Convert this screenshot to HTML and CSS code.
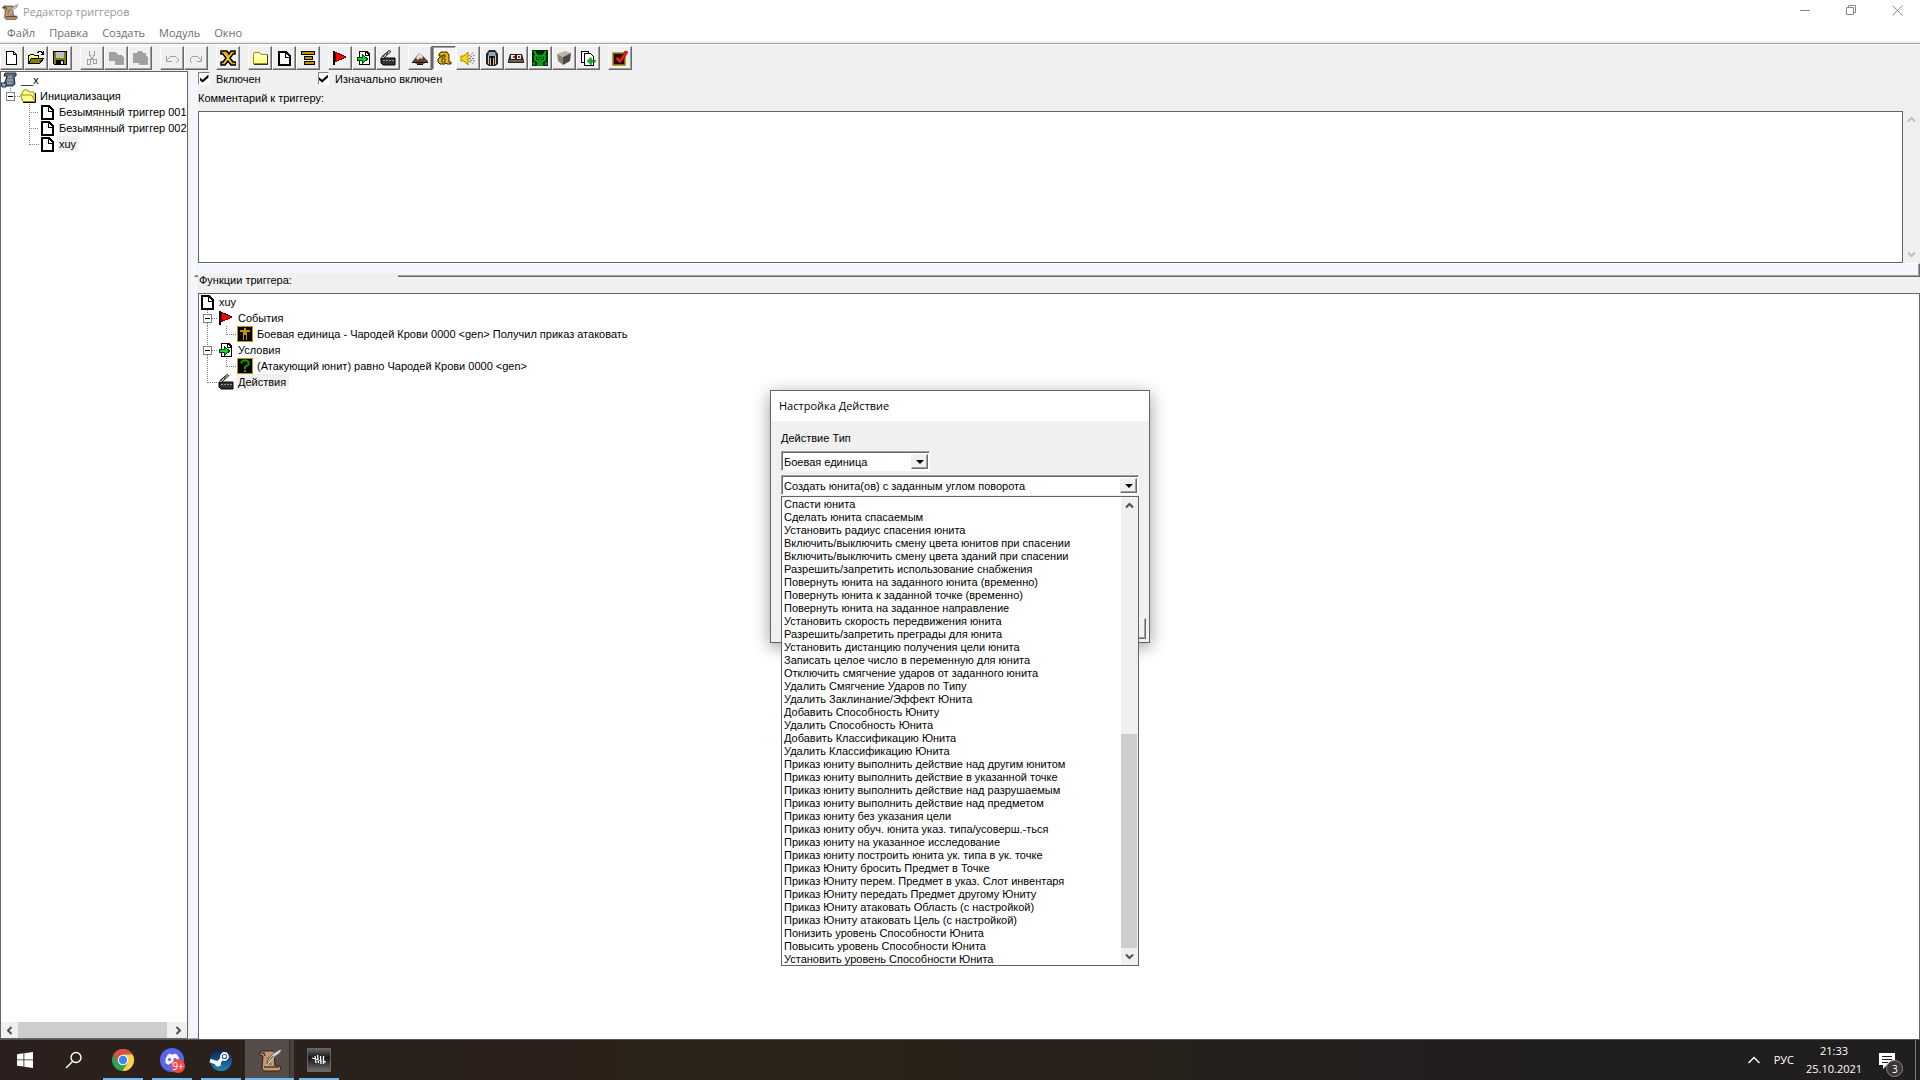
FILE: index.html
```html
<!DOCTYPE html>
<html lang="ru">
<head>
<meta charset="utf-8">
<title>Редактор триггеров</title>
<link rel="stylesheet" href="styles.css">
</head>
<body>
<svg class="defs" width="0" height="0" aria-hidden="true">
  <symbol id="page" viewBox="0 0 16 16"><path d="M3 2h7l4 4v9H3z" fill="#fff" stroke="#000" stroke-width="2"/><path d="M9 2v5h5" fill="none" stroke="#000"/></symbol>
  <symbol id="page-thin" viewBox="0 0 16 16"><path d="M2.500 1.500h7l3 3v10h-10z" fill="#fff" stroke="#000"/><path d="M9.500 1.500v3h3" fill="none" stroke="#000"/></symbol>
  <symbol id="open" viewBox="0 0 16 16"><path d="M.5 13.500v-8h1l1-1h3l1 1h4v3" fill="#ffff80" stroke="#000"/><path d="M.5 13.500l3-5h12l-4 5z" fill="#808000" stroke="#000"/><path d="M9 2.500h1l1-1h2l2 2M15.500 1v3h-3" fill="none" stroke="#000"/></symbol>
  <symbol id="save" viewBox="0 0 16 16"><path d="M1.500 1.500h13v13h-12l-1-1z" fill="#808000" stroke="#000"/><path d="M4 2h8v6H4z" fill="#c0c0c0"/><path d="M4 10h8v5H4z" fill="#000"/><path d="M9 11h2v3H9z" fill="#ddd"/></symbol>
  <symbol id="cut" viewBox="0 0 16 16"><path d="M5.500 1v4l4 5M10.500 1v4l-4 5" fill="none" stroke="#a0a0a0"/><rect x="3.500" y="9.500" width="3" height="5" rx="1" fill="none" stroke="#a0a0a0"/><rect x="9.500" y="9.500" width="3" height="4" rx="1" fill="none" stroke="#a0a0a0"/></symbol>
  <symbol id="copy" viewBox="0 0 16 16"><path d="M1 2h6l3 3h3l3 3v7H7v-4H1z" fill="#a0a0a0"/><path d="M7 15.500h9.500V8" fill="none" stroke="#fff"/></symbol>
  <symbol id="paste" viewBox="0 0 16 16"><path d="M1 3h3l2-2h3l2 2h3v3l2 2v7H7v-2H1z" fill="#a0a0a0"/><path d="M7 15.500h9.500" stroke="#fff"/></symbol>
  <symbol id="undo" viewBox="0 0 16 16"><path d="M2.500 6v5h5M3 10l4-4h4l3 3v2l-2 2" fill="none" stroke="#a0a0a0"/></symbol>
  <symbol id="redo" viewBox="0 0 16 16"><path d="M13.500 6v5h-5M13 10L9 6H5L2 9v2l2 2" fill="none" stroke="#a0a0a0"/></symbol>
  <symbol id="vars" viewBox="0 0 16 16"><path d="M1 1h6l2 3 2-3h4v3h-2l-3 4 3 4h3v3h-5l-3-4-3 4H1v-3h2l3-4-3-4H1z" fill="#d8a800" stroke="#000" stroke-width="1.500"/><path d="M4 3l7 10M12 3l-8 10" stroke="#ffe040"/></symbol>
  <symbol id="folder" viewBox="0 0 16 16"><path d="M1 4l2-2h4l2 2h6v9H1z" fill="#ffffa0" stroke="#a09000"/><path d="M2 14.500h13.500V5" fill="none" stroke="#333"/><path d="M2 5h12" stroke="#fff"/></symbol>
  <symbol id="folder-open" viewBox="0 0 16 16"><path d="M2 12V5l2-3h4l1 2h5v8z" fill="#ffff90" stroke="#a09000"/><path d="M3 13.500L0.500 7h11l3.500 6.500z" fill="#ffff90" stroke="#a09000"/><path d="M3 14.500h12.500V5" fill="none" stroke="#000"/></symbol>
  <symbol id="comment" viewBox="0 0 16 16"><path d="M1.500 1.500h13v3h-13zM4.500 6.500h8v3h-8zM4.500 11.500h10v3h-10z" fill="#c89000" stroke="#000"/></symbol>
  <symbol id="flag" viewBox="0 0 16 16"><path d="M1.500 1v14" stroke="#000" stroke-width="2"/><path d="M3 2l11 5-11 5z" fill="#f00" stroke="#600"/></symbol>
  <symbol id="cond" viewBox="0 0 16 16"><path d="M3.500 1.500h7l3 3v10h-10z" fill="#fff" stroke="#000" stroke-width="1.500"/><path d="M9.500 1.500v4h4" fill="none" stroke="#000"/><path d="M1.500 7.500h5v-3l5 4.500-5 4.500v-3h-5z" fill="#00e020" stroke="#004000"/></symbol>
  <symbol id="action" viewBox="0 0 16 16"><path d="M1 8h14v7H3l-2-2z" fill="#333" stroke="#000"/><path d="M1.500 7L9 .500l2 1L4 8" fill="#ddd" stroke="#222"/><path d="M3 7l2-3M6 5l2-3" stroke="#222"/><path d="M3 10.500h11" stroke="#999" stroke-dasharray="2 1"/></symbol>
  <symbol id="mount" viewBox="0 0 16 16"><path d="M0 12l4-5 3-4 4 3 5 5v1l-5 2H5z" fill="#604028"/><path d="M7 3l4 3-1 3-2-1-2 2-2-2z" fill="#ddd"/><path d="M0 12.500h16M5 14.500h6" stroke="#111"/></symbol>
  <symbol id="letter-a" viewBox="0 0 16 16"><path d="M3 4l2-2h6l2 3v7h2v2h-4l-1-1-1 1H4l-2-2V9l2-2h5V5H7v1H3zM6 9v3h3V9z" fill="#e8b800" stroke="#302000" fill-rule="evenodd"/></symbol>
  <symbol id="sound" viewBox="0 0 16 16"><path d="M1 6h3l4-4v13l-4-4H1z" fill="#ffd800" stroke="#a88000"/><path d="M9 8.500h6M9 6l5-4M9 11l5 3M10 7l5-2M10 10l5 1" stroke="#777" stroke-dasharray="2 1"/></symbol>
  <symbol id="unit" viewBox="0 0 16 16"><path d="M5 0h6l3 4v10l-3 2H5l-3-2V4z" fill="#222"/><path d="M5 2h6l1 4H4z" fill="#8aa8c0"/><path d="M7 6h2v7H7z" fill="#000"/><path d="M4.500 6v8M11.500 6v8M6.500 8v7M9.500 8v7" stroke="#d8c8a0"/></symbol>
  <symbol id="tab" viewBox="0 0 16 16"><path d="M2 4h12l2 7v2H0v-2z" fill="#2c201c"/><path d="M3 5h4v4H3zM9 5h4v4H9z" fill="#f4f0e8"/><path d="M5 6h2v2H5zM10 6h2v2h-2z" fill="#e01010"/><path d="M1 11h14" stroke="#b0a090"/></symbol>
  <symbol id="orc" viewBox="0 0 16 16"><path d="M0 0h16v16H0z" fill="#002800"/><path d="M2 1l3 5h6l3-5M3 5v5l3 1v2h4v-2l3-1V5M5 8h2M9 8h2M2 15v-3M14 15v-3M5 15h6M8 8v4" fill="none" stroke="#00c020" stroke-width="1.500"/></symbol>
  <symbol id="cube" viewBox="0 0 16 16"><path d="M1 4l8-3 6 2-8 4z" fill="#b8b4a8"/><path d="M1 4l6 3v8l-5-4z" fill="#888478"/><path d="M7 7l8-4-1 8-7 4z" fill="#4c4840"/></symbol>
  <symbol id="import" viewBox="0 0 16 16"><path d="M1.500 1.500h7v11h-7z" fill="#fff" stroke="#000"/><path d="M4.500 3.500h6l3 3v9h-9z" fill="#fff" stroke="#000"/><path d="M15 10h-4V7.500L7 11l4 3.500V12h4z" fill="#00c020" stroke="#003800" stroke-width=".5"/></symbol>
  <symbol id="test" viewBox="0 0 16 16"><path d="M1 3h12v12H1z" fill="#111" stroke="#b08000" stroke-width="1.500"/><path d="M3 8l3-1 2 2 5-8 3 1-7 11H7z" fill="#f02000" stroke="#600000" stroke-width=".6"/></symbol>
  <symbol id="scroll-blue" viewBox="0 0 16 16"><path d="M4 1h11v3h-2l1 8-2 2H2l-1-1 3-3 2-6H3z" fill="#607080" stroke="#182838"/><path d="M0 11h5v4H1z" fill="#9ab0c0" stroke="#182838"/><path d="M7 5h4M6 8h6M6 11h5" stroke="#b8c8d8"/></symbol>
  <symbol id="scroll" viewBox="0 0 24 24"><path d="M1 5l2-2h12l3 2-2 1 1 12h5l1 3-2 2H6l-2-2 1-13-3-1z" fill="#c09a70" stroke="#302014"/><path d="M2 5h4l1 3M6 19h15" fill="none" stroke="#5a3c22" stroke-width="1.500"/><path d="M8 10h4M8 13h2M9 16h5" stroke="#8a6644"/><path d="M9 16c1-6 5-12 15-15-1 4-5 7-10 8l-4 7z" fill="#c8c8c4" stroke="#404040" stroke-width=".8"/><path d="M9 17L22 2" stroke="#f0f0ec" stroke-width=".8"/></symbol>
  <symbol id="man" viewBox="0 0 16 16"><path d="M.5.500h15v15H.5z" fill="#000" stroke="#c89000"/><path d="M7 2h2v2h4v2h-3v8H9V9H7v5H6V6H3V4h4z" fill="#c89000"/></symbol>
  <symbol id="question" viewBox="0 0 16 16"><path d="M.5.500h15v15H.5z" fill="#000" stroke="#c89000"/><path d="M4.500 5.500V4l2-1.500h3l2 1.500v2.500L8 9v2M8 12v2" fill="none" stroke="#00a010" stroke-width="2"/></symbol>
  <symbol id="minus" viewBox="0 0 19 16"><path d="M9.500 0v4M14 8.500h5" stroke="#808080" stroke-dasharray="1 1"/><path d="M5.500 4.500h8v8h-8z" fill="#fff" stroke="#808080"/><path d="M7 8.500h5" stroke="#000"/></symbol>
  <symbol id="minus-more" viewBox="0 0 19 16"><path d="M8.500 0v4M8.500 13v3M13 8.500h6" stroke="#808080" stroke-dasharray="1 1"/><path d="M4.500 4.500h8v8h-8z" fill="#fff" stroke="#808080"/><path d="M6 8.500h5" stroke="#000"/></symbol>
  <symbol id="tee" viewBox="0 0 19 16"><path d="M9.500 0v16M9 8.500h10" stroke="#808080" stroke-dasharray="1 1"/></symbol>
  <symbol id="end" viewBox="0 0 19 16"><path d="M8.500 0v9M9 8.500h10" stroke="#808080" stroke-dasharray="1 1"/></symbol>
  <symbol id="end-side" viewBox="0 0 19 16"><path d="M9.500 0v9M10 8.500h9" stroke="#808080" stroke-dasharray="1 1"/></symbol>
  <symbol id="vert" viewBox="0 0 19 16"><path d="M8.500 0v16" stroke="#808080" stroke-dasharray="1 1"/></symbol>
  <symbol id="chev-up" viewBox="0 0 9 9"><path d="M1 6.500l3.500-3.500L8 6.500" fill="none" stroke="currentColor" stroke-width="2"/></symbol>
  <symbol id="chev-down" viewBox="0 0 9 9"><path d="M1 2.500L4.500 6 8 2.500" fill="none" stroke="currentColor" stroke-width="2"/></symbol>
  <symbol id="chev-left" viewBox="0 0 9 9"><path d="M6.500 1L3 4.500 6.500 8" fill="none" stroke="currentColor" stroke-width="2"/></symbol>
  <symbol id="chev-right" viewBox="0 0 9 9"><path d="M2.500 1L6 4.500 2.500 8" fill="none" stroke="currentColor" stroke-width="2"/></symbol>
</svg>

<div class="app">
  <header class="titlebar">
    <svg class="i16"><use href="#scroll"/></svg>
    <h1 class="title">Редактор триггеров</h1>
    <div class="caption">
      <button aria-label="Свернуть"><svg width="11" height="11"><path d="M0 5.500h10" stroke="#888"/></svg></button>
      <button aria-label="Восстановить"><svg width="11" height="11"><path d="M.5 2.500h7v7h-7zM2.500 2.500v-2h7v7h-2" fill="none" stroke="#888"/></svg></button>
      <button aria-label="Закрыть"><svg width="11" height="11"><path d="M.5.500l10 10M10.500.500l-10 10" stroke="#888"/></svg></button>
    </div>
  </header>
  <nav class="menu">
    <button>Файл</button><button>Правка</button><button>Создать</button><button>Модуль</button><button>Окно</button>
  </nav>
  <div class="toolbar" role="toolbar">
    <div class="group">
      <button class="tool"><svg class="i16 px"><use href="#page-thin"/></svg></button>
      <button class="tool"><svg class="i16 px"><use href="#open"/></svg></button>
      <button class="tool"><svg class="i16 px"><use href="#save"/></svg></button>
    </div>
    <div class="group">
      <button class="tool"><svg class="i16 px"><use href="#cut"/></svg></button>
      <button class="tool"><svg class="i16 px"><use href="#copy"/></svg></button>
      <button class="tool"><svg class="i16 px"><use href="#paste"/></svg></button>
    </div>
    <div class="group">
      <button class="tool"><svg class="i16 px"><use href="#undo"/></svg></button>
      <button class="tool"><svg class="i16 px"><use href="#redo"/></svg></button>
    </div>
    <div class="group">
      <button class="tool"><svg class="i16"><use href="#vars"/></svg></button>
    </div>
    <div class="group">
      <button class="tool"><svg class="i16 px"><use href="#folder"/></svg></button>
      <button class="tool"><svg class="i16 px"><use href="#page"/></svg></button>
      <button class="tool"><svg class="i16 px"><use href="#comment"/></svg></button>
    </div>
    <div class="group">
      <button class="tool"><svg class="i16 px"><use href="#flag"/></svg></button>
      <button class="tool"><svg class="i16 px"><use href="#cond"/></svg></button>
      <button class="tool"><svg class="i16"><use href="#action"/></svg></button>
    </div>
    <div class="group">
      <button class="tool"><svg class="i16"><use href="#mount"/></svg></button>
      <button class="tool pressed"><svg class="i16"><use href="#letter-a"/></svg></button>
      <button class="tool"><svg class="i16"><use href="#sound"/></svg></button>
      <button class="tool"><svg class="i16"><use href="#unit"/></svg></button>
      <button class="tool"><svg class="i16"><use href="#tab"/></svg></button>
      <button class="tool"><svg class="i16"><use href="#orc"/></svg></button>
      <button class="tool"><svg class="i16"><use href="#cube"/></svg></button>
      <button class="tool"><svg class="i16 px"><use href="#import"/></svg></button>
    </div>
    <div class="group">
      <button class="tool"><svg class="i16"><use href="#test"/></svg></button>
    </div>
  </div>

  <main class="work">
    <aside class="side">
      <ul class="tree">
        <li><svg class="i16"><use href="#scroll-blue"/></svg><span>__x</span></li>
        <li><svg class="lead px"><use href="#minus"/></svg><svg class="i16"><use href="#folder-open"/></svg><span>Инициализация</span></li>
        <li><i class="lead"></i><svg class="lead px"><use href="#tee"/></svg><svg class="i16 px"><use href="#page"/></svg><span>Безымянный триггер 001</span></li>
        <li><i class="lead"></i><svg class="lead px"><use href="#tee"/></svg><svg class="i16 px"><use href="#page"/></svg><span>Безымянный триггер 002</span></li>
        <li><i class="lead"></i><svg class="lead px"><use href="#end-side"/></svg><svg class="i16 px"><use href="#page"/></svg><span class="picked">xuy</span></li>
      </ul>
      <div class="hbar">
        <svg class="chev"><use href="#chev-left"/></svg>
        <div class="track"><div class="thumb"></div></div>
        <svg class="chev"><use href="#chev-right"/></svg>
      </div>
    </aside>
    <div class="vsplit"></div>
    <section class="pane">
      <div class="checks">
        <label><input type="checkbox" checked>Включен</label>
        <label><input type="checkbox" checked>Изначально включен</label>
      </div>
      <label class="caption-text" for="note">Комментарий к триггеру:</label>
      <div class="note-row">
        <textarea id="note" class="note"></textarea>
        <div class="vbar off">
          <svg class="chev"><use href="#chev-up"/></svg>
          <svg class="chev"><use href="#chev-down"/></svg>
        </div>
      </div>
      <div class="hsplit"></div>
      <h2 class="functions">Функции триггера:</h2>
      <ul class="tree body">
        <li><svg class="i16 px"><use href="#page"/></svg><span>xuy</span></li>
        <li><svg class="lead px"><use href="#minus-more"/></svg><svg class="i16 px"><use href="#flag"/></svg><span>События</span></li>
        <li><svg class="lead px"><use href="#vert"/></svg><svg class="lead px"><use href="#end"/></svg><svg class="i16 px"><use href="#man"/></svg><span>Боевая единица - Чародей Крови 0000 &lt;gen&gt; Получил приказ атаковать</span></li>
        <li><svg class="lead px"><use href="#minus-more"/></svg><svg class="i16 px"><use href="#cond"/></svg><span>Условия</span></li>
        <li><svg class="lead px"><use href="#vert"/></svg><svg class="lead px"><use href="#end"/></svg><svg class="i16"><use href="#question"/></svg><span>(Атакующий юнит) равно Чародей Крови 0000 &lt;gen&gt;</span></li>
        <li><svg class="lead px"><use href="#end"/></svg><svg class="i16"><use href="#action"/></svg><span class="picked">Действия</span></li>
      </ul>
    </section>
  </main>

  <footer class="taskbar">
    <button class="task" aria-label="Пуск"><svg width="16" height="16" viewBox="0 0 16 16"><path d="M0 2.200L6.500 1.300v6.200H0zM7.300 1.200L16 0v7.500H7.300zM0 8.300h6.500v6.300L0 13.700zM7.300 8.300H16V16l-8.700-1.200z" fill="#fff"/></svg></button>
    <button class="task" aria-label="Поиск"><svg width="18" height="18" viewBox="0 0 18 18"><circle cx="11" cy="6.500" r="5" fill="none" stroke="#fff" stroke-width="1.400"/><path d="M7.500 10.500L1 17" stroke="#fff" stroke-width="1.500"/></svg></button>
    <button class="task run" aria-label="Chrome"><svg width="24" height="24" viewBox="0 0 24 24"><circle cx="12" cy="12" r="11" fill="#30a352"/><path d="M2.470 6.500A11 11 0 0 1 21.530 6.500H12L7.200 14.800z" fill="#dd4f42"/><path d="M21.530 6.500A11 11 0 0 1 11.500 23l5.300-8.300L12 6.500z" fill="#fdcf46"/><circle cx="12" cy="12" r="5.300" fill="#fff"/><circle cx="12" cy="12" r="4.200" fill="#3f84f0"/></svg></button>
    <button class="task run" aria-label="Discord">
      <svg width="26" height="26" viewBox="0 0 26 26"><circle cx="13" cy="13" r="12" fill="#5865f2"/><path d="M9 7.500l2.500-1 .5 1h3l.5-1 2.500 1c2 3 3 6 2.500 8.500l-3 2-1-1.500h-6L9.500 18l-3-2C6 13 7 10 9 7.500z" fill="#fff"/><circle cx="10.500" cy="12.500" r="1.600" fill="#5865f2"/><circle cx="16" cy="12.500" r="1.600" fill="#5865f2"/><circle cx="19" cy="19" r="7" fill="#ef4a4a"/></svg>
      <span class="count">9+</span>
    </button>
    <button class="task run" aria-label="Steam"><svg width="24" height="24" viewBox="0 0 24 24"><defs><linearGradient id="sg" x2="0" y2="1"><stop stop-color="#101c48"/><stop offset="1" stop-color="#1888c0"/></linearGradient></defs><circle cx="12" cy="12" r="11" fill="url(#sg)"/><path d="M1 12.500l8 3 4-5" fill="none" stroke="#fff" stroke-width="3.500"/><circle cx="15.500" cy="8.500" r="3.500" fill="#14306a" stroke="#fff" stroke-width="1.800"/><circle cx="15.500" cy="8.500" r="1.800" fill="#fff"/><circle cx="9" cy="15.500" r="3" fill="#fff"/></svg></button>
    <button class="task run active" aria-label="Редактор"><svg width="24" height="24"><use href="#scroll"/></svg></button>
    <button class="task run" aria-label="Игра"><svg width="24" height="24" viewBox="0 0 24 24"><defs><linearGradient id="dg" x2="0" y2="1"><stop stop-color="#686868"/><stop offset=".4" stop-color="#151515"/><stop offset="1" stop-color="#707070"/></linearGradient></defs><path d="M.5.500h23v23H.5z" fill="url(#dg)" stroke="#666"/><path d="M8 8l1 7M10.500 7l1 8M13.500 8l.5 8M16.500 8v8M5 10l14 4" fill="none" stroke="#fff" stroke-width="1.300"/></svg></button>
    <div class="tray">
      <svg width="12" height="8"><path d="M.5 7L6 1.500 11.500 7" fill="none" stroke="#fff" stroke-width="1.400"/></svg>
      <span class="lang">РУС</span>
      <time class="clock">21:33<br>25.10.2021</time>
      <div class="notes">
        <svg width="24" height="24"><path d="M0 0h16v12H8l-4 4v-4H0z" fill="#fff"/><path d="M3 3.500h10M3 6.500h10M3 9.500h6" stroke="#221e1e"/><circle cx="15.500" cy="15.500" r="8" fill="#3a3637" stroke="#888"/></svg>
        <span class="count">3</span>
      </div>
    </div>
  </footer>
</div>

<div class="dialog" role="dialog" aria-labelledby="dlg">
  <h2 id="dlg" class="dialog-title">Настройка Действие</h2>
  <div class="dialog-body">
    <label for="kind" class="dialog-label">Действие Тип</label>
    <div class="combo short"><select id="kind"><option>Боевая единица</option></select><span class="drop"></span></div>
    <div class="combo"><select aria-label="Действие"><option>Создать юнита(ов) с заданным углом поворота</option></select><span class="drop"></span></div>
    <button class="cancel" aria-label="Отмена"></button>
    <div class="popup">
      <select size="36" class="list" aria-label="Список действий">
        <option>Спасти юнита</option>
        <option>Сделать юнита спасаемым</option>
        <option>Установить радиус спасения юнита</option>
        <option>Включить/выключить смену цвета юнитов при спасении</option>
        <option>Включить/выключить смену цвета зданий при спасении</option>
        <option>Разрешить/запретить использование снабжения</option>
        <option>Повернуть юнита на заданного юнита (временно)</option>
        <option>Повернуть юнита к заданной точке (временно)</option>
        <option>Повернуть юнита на заданное направление</option>
        <option>Установить скорость передвижения юнита</option>
        <option>Разрешить/запретить преграды для юнита</option>
        <option>Установить дистанцию получения цели юнита</option>
        <option>Записать целое число в переменную для юнита</option>
        <option>Отключить смягчение ударов от заданного юнита</option>
        <option>Удалить Смягчение Ударов по Типу</option>
        <option>Удалить Заклинание/Эффект Юнита</option>
        <option>Добавить Способность Юниту</option>
        <option>Удалить Способность Юнита</option>
        <option>Добавить Классификацию Юнита</option>
        <option>Удалить Классификацию Юнита</option>
        <option>Приказ юниту выполнить действие над другим юнитом</option>
        <option>Приказ юниту выполнить действие в указанной точке</option>
        <option>Приказ юниту выполнить действие над разрушаемым</option>
        <option>Приказ юниту выполнить действие над предметом</option>
        <option>Приказ юниту без указания цели</option>
        <option>Приказ юниту обуч. юнита указ. типа/усоверш.-ться</option>
        <option>Приказ юниту на указанное исследование</option>
        <option>Приказ юниту построить юнита ук. типа в ук. точке</option>
        <option>Приказ Юниту бросить Предмет в Точке</option>
        <option>Приказ Юниту перем. Предмет в указ. Слот инвентаря</option>
        <option>Приказ Юниту передать Предмет другому Юниту</option>
        <option>Приказ Юниту атаковать Область (с настройкой)</option>
        <option>Приказ Юниту атаковать Цель (с настройкой)</option>
        <option>Понизить уровень Способности Юнита</option>
        <option>Повысить уровень Способности Юнита</option>
        <option>Установить уровень Способности Юнита</option>
      </select>
      <div class="vbar">
        <svg class="chev"><use href="#chev-up"/></svg>
        <div class="thumb"></div>
        <svg class="chev"><use href="#chev-down"/></svg>
      </div>
    </div>
  </div>
</div>
</body>
</html>
```
FILE: styles.css
```css
* { box-sizing: border-box; }
body {
  margin: 0;
  background: #f0f0f0;
  color: #000;
  font: 11px/16px "Liberation Sans", Arial, sans-serif;
}
.defs { position: absolute; }
button, select, input, textarea { font: inherit; color: inherit; margin: 0; padding: 0; border: 0; background: none; border-radius: 0; outline: 0; }
h1, h2 { margin: 0; font: inherit; }
svg { display: block; flex: none; }
.px { shape-rendering: crispEdges; }
.i16 { width: 16px; height: 16px; }

.app { display: flex; flex-direction: column; height: 100vh; min-height: 700px; }

/* Window frame */
.titlebar { display: flex; align-items: center; height: 23px; padding-left: 2px; gap: 5px; background: #fff; }
.title { color: #999; font: 11px/16px "Open Sans", sans-serif; }
.caption { display: flex; margin-left: auto; align-self: flex-start; }
.caption button { display: grid; place-items: center; width: 46px; height: 20px; }
.menu { display: flex; gap: 14px; height: 18px; padding-left: 7px; background: #fff; }
.menu button { color: #6d6d6d; font: 11px/20px "Open Sans", sans-serif; }

/* Toolbar */
.toolbar { display: flex; gap: 8px; margin-top: 2px; padding: 2px 0 1px; border-top: 1px solid #a0a0a0; box-shadow: inset 0 1px #fff; }
.group { display: flex; }
.tool { display: grid; place-items: center; width: 24px; height: 24px; border: 1px solid; border-color: #fff #696969 #696969 #fff; box-shadow: inset -1px -1px #a0a0a0; }
.pressed { border-color: #696969 #fff #fff #696969; box-shadow: inset 1px 1px #a0a0a0; background: #f8f8f8; }

/* Work area */
.work { display: flex; flex: 1; min-height: 0; }
.side { display: flex; flex-direction: column; width: 188px; border: 1px solid #646464; background: #fff; }
.tree { flex: 1; min-height: 0; margin: 0; padding: 0; list-style: none; overflow: hidden; background: #fff; }
.tree li { display: flex; height: 16px; white-space: nowrap; }
.tree span { margin-left: 2px; padding: 0 3px 0 2px; }
.tree .picked { background: #f0f0f0; }
.lead { flex: none; width: 19px; height: 16px; }
.hbar { display: flex; align-items: center; height: 16px; background: #f0f0f0; color: #505050; }
.chev { width: 9px; height: 9px; margin: 4px; }
.track { flex: 1; }
.thumb { background: #cdcdcd; }
.track .thumb { width: 98%; height: 16px; }
.vsplit { width: 10px; border-left: 2px solid #f0f0f0; border-bottom: 1px solid #a0a0a0; background: #f3f6fc; }
.pane { display: flex; flex: 1; flex-direction: column; min-width: 0; }
.checks { display: flex; height: 17px; }
.checks label { display: flex; height: 15px; align-items: center; width: 120px; white-space: nowrap; }
.checks input { appearance: none; display: grid; place-items: center; width: 12px; height: 13px; margin-right: 6px; border: 1px solid; border-color: #808080 #fff #fff #808080; background: #fff; }
.checks input::before { content: ""; width: 9px; height: 8px; background: #000; clip-path: polygon(0 35%, 35% 65%, 100% 0, 100% 38%, 35% 100%, 0 70%); }
.caption-text { height: 23px; line-height: 20px; }
.note-row { display: flex; height: 152px; }
.note { flex: 1; border: 1px solid #646464; background: #fff; resize: none; }
.vbar { display: flex; flex-direction: column; width: 17px; background: #f0f0f0; color: #505050; }
.off { justify-content: space-between; color: #c0c0c0; }
.hsplit { height: 14px; margin-left: -4px; border: 1px solid; border-color: #fff #696969 #696969 #fff; box-shadow: inset -1px -1px #a0a0a0; background: #f3f6fc; }
.functions { width: 200px; height: 20px; margin-top: -4px; padding-left: 1px; line-height: 14px; background: #f0f0f0; position: relative; }
.body { border: 1px solid #646464; border-bottom: 0; }

/* Dialog */
.dialog { position: absolute; left: calc(50% - 190px); top: calc(50% - 150px); width: 380px; border: 1px solid #646464; background: #f0f0f0; box-shadow: 0 4px 16px rgba(0, 0, 0, .4); }
.dialog-title { height: 30px; padding-left: 8px; background: #fff; font: 11px/30px "Open Sans", sans-serif; }
.dialog-body { display: flex; flex-direction: column; position: relative; height: 221px; padding: 8px 10px 3px; }
.dialog-label { height: 22px; line-height: 18px; }
.combo { display: flex; height: 20px; margin-bottom: 4px; border: 1px solid; border-color: #a0a0a0 #fff #fff #a0a0a0; box-shadow: inset 1px 1px #696969; padding: 2px 1px 1px 2px; background: #fff; }
.short { width: 149px; }
.combo select { flex: 1; min-width: 0; appearance: none; line-height: 16px; }
.drop { display: grid; place-items: center; width: 17px; border: 1px solid; border-color: #f0f0f0 #696969 #696969 #f0f0f0; box-shadow: inset -1px -1px #a0a0a0; background: #f0f0f0; }
.drop::before { content: ""; border: 4px solid transparent; border-top-color: #000; border-bottom: 0; }
.cancel { align-self: flex-end; width: 75px; height: 21px; margin: auto -7px 0 0; border: 1px solid; border-color: #fff #696969 #696969 #fff; box-shadow: inset -1px -1px #a0a0a0; }
.popup { position: absolute; left: 10px; top: 75px; display: flex; width: 358px; border: 1px solid #646464; background: #fff; }
.list { flex: 1; min-width: 0; height: 468px; overflow: hidden; }
.list option { height: 13px; min-height: 13px; padding: 1px 2px 0; line-height: 13px; }
.popup .thumb { height: 214px; margin: auto 1px 0 0; }

/* Taskbar */
.taskbar { display: flex; height: 41px; border-top: 1px solid #555; background: linear-gradient(90deg, #2b201d, #2b2218 45%, #211e1f 80%); color: #fff; }
.task { position: relative; display: grid; place-items: center; width: 49px; height: 40px; }
.run::after { content: ""; position: absolute; inset: auto 4px 0 5px; height: 2px; background: #76b9ed; }
.active { background: linear-gradient(90deg, #564c49 44px, #332a28 44px 45px, #4a403d 45px); }
.active::after { inset: auto 0 0; }
.count { position: absolute; font: 10px/12px "Open Sans", sans-serif; }
.task .count { left: 24px; top: 20px; width: 14px; text-align: center; }
.tray { display: flex; align-items: center; margin-left: auto; margin-right: 4px; padding-right: 12px; border-right: 1px solid #777; font: 11px/18px "Open Sans", sans-serif; }
.lang { margin-left: 14px; }
.clock { width: 80px; text-align: center; }
.notes { position: relative; margin: 9px 0 0 5px; }
.notes .count { left: 13px; top: 10px; }
```
